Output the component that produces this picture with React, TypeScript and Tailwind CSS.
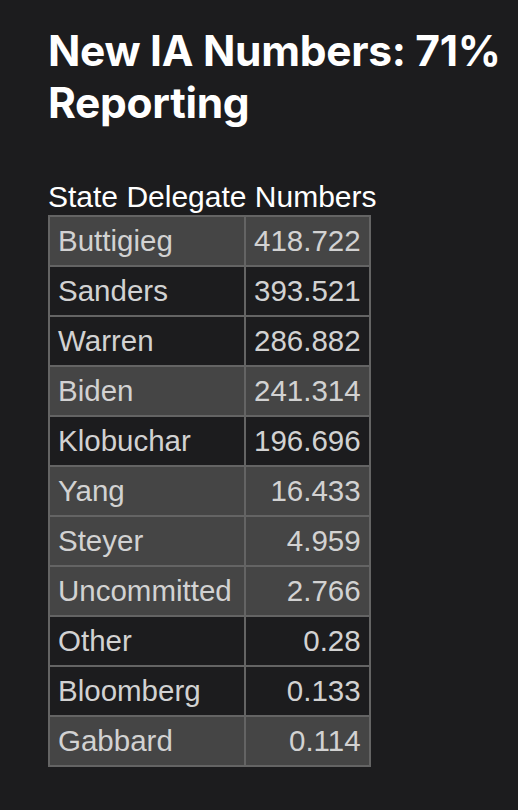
const rows: [string, string, boolean][] = [
  ["Buttigieg", "418.722", true],
  ["Sanders", "393.521", false],
  ["Warren", "286.882", false],
  ["Biden", "241.314", true],
  ["Klobuchar", "196.696", false],
  ["Yang", "16.433", true],
  ["Steyer", "4.959", true],
  ["Uncommitted", "2.766", true],
  ["Other", "0.28", false],
  ["Bloomberg", "0.133", false],
  ["Gabbard", "0.114", true],
];

export default function App() {
  return (
    <div className="min-h-[810px] w-[518px] bg-[#1c1c1e] pl-12 pr-3 pt-[25px] text-white">
      <h1 className="font-['Inter',sans-serif] text-[42.5px] font-bold leading-[52px] tracking-[-0.3px]">
        New IA Numbers: 71% Reporting
      </h1>
      <div className="mt-[50px] font-['Liberation_Sans',Arial,sans-serif]">
        <div className="whitespace-nowrap text-[30px] leading-[36px] text-white">State Delegate Numbers</div>
        <table className="border-collapse text-[29.5px] text-[#d2d2d2]">
          <tbody className="border-2 border-[#646464]">
            {rows.map(([name, num, gray]) => (
              <tr key={name} className={gray ? "bg-[#454545]" : "bg-[#1c1c1e]"}>
                <td className="h-[50px] w-[196px] border-2 border-[#646464] px-2 leading-none">{name}</td>
                <td className="h-[50px] w-[124px] border-2 border-[#646464] px-2 text-right leading-none">
                  {num}
                </td>
              </tr>
            ))}
          </tbody>
        </table>
      </div>
    </div>
  );
}
